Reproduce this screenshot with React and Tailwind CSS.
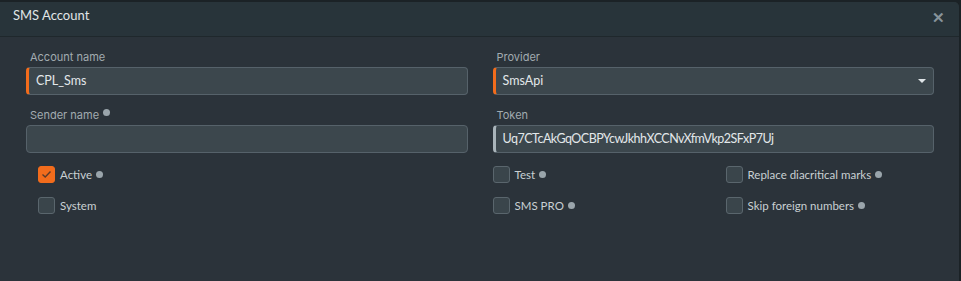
function InfoDot() {
    return <span className="inline-block w-[7px] h-[7px] rounded-full bg-[#9aa5ab] ml-[4px] align-middle" />;
}

function Field({ label, value, accent, info, select, tight }) {
    return (
        <div>
            <div className="h-[14px] mb-[3px] pl-[4px] text-[11px] leading-[14px] text-[#a2abb0] flex items-center">
                {label}
                {info && <span className="w-[7px] h-[7px] rounded-full bg-[#9aa5ab] ml-[4px] -mt-[5px]" />}
            </div>
            <div
                className={`relative h-[28px] rounded-[4px] border border-[#56626a] bg-[#3c474d] flex items-center pl-[7px] font-['Lato',sans-serif] text-[12.5px] text-[#e3e8ea] ${tight ? 'tracking-[-0.04em]' : ''} ${accent}`}
            >
                {value}
                {select && (
                    <span className="absolute right-[7px] top-[11px] w-0 h-0 border-l-[4px] border-r-[4px] border-t-[4px] border-l-transparent border-r-transparent border-t-[#dfe5e8]" />
                )}
            </div>
        </div>
    );
}

function Check({ label, checked, info }) {
    return (
        <div className="flex items-center h-[17px]">
            <span
                className={`w-[17px] h-[17px] rounded-[3px] border flex items-center justify-center ${checked ? 'bg-[#f26c1c] border-[#f26c1c]' : 'bg-[#3a454b] border-[#5a666d]'}`}
            >
                {checked && (
                    <svg width="11" height="9" viewBox="0 0 11 9" fill="none">
                        <path d="M1.5 4.5 L4.2 7 L9.5 1.5" stroke="#5a3a2a" strokeWidth="1.4" />
                    </svg>
                )}
            </span>
            <span className="ml-[5px] font-['Lato',sans-serif] text-[11.5px] text-[#c9d0d3]">{label}</span>
            {info && <InfoDot />}
        </div>
    );
}

export default function App() {
    return (
        <div className="w-[961px] h-[281px] bg-[#1b2226] pt-[2px] pr-[2px] font-['Inter',sans-serif]">
            <div className="h-full rounded-tr-[5px] overflow-hidden bg-[#2b333a] flex flex-col">
                {/* Header */}
                <div className="h-[35px] shrink-0 bg-[#28343a] border-b border-[#1f282c] flex items-center justify-between pl-[13px] pr-[14px] pb-[6px]">
                    <span className="font-['Lato',sans-serif] text-[13px] text-[#e0e6e8]">SMS Account</span>
                    <span className="text-[15px] font-bold text-[#87939a] leading-none mt-[3px]">✕</span>
                </div>

                {/* Body */}
                <div className="pl-[26px] pr-[25px] pt-[13px]">
                    <div className="grid grid-cols-2 gap-x-[25px] gap-y-[13px]">
                        <Field label="Account name" value="CPL_Sms" accent="border-l-[3px] border-l-[#f26c1c]" />
                        <Field label="Provider" value="SmsApi" accent="border-l-[3px] border-l-[#f26c1c]" select />
                        <Field label="Sender name" value="" info />
                        <Field
                            label="Token"
                            value="Uq7CTcAkGqOCBPYcwJkhhXCCNvXfmVkp2SFxP7Uj"
                            accent="border-l-[3px] border-l-[#a9b4ba]"
                            tight
                        />
                    </div>

                    <div className="grid grid-cols-2 gap-x-[25px] mt-[13px]">
                        <div className="pl-[12px] flex flex-col gap-[14px]">
                            <Check label="Active" checked info />
                            <Check label="System" />
                        </div>
                        <div className="grid grid-cols-[233px_1fr] gap-y-[14px]">
                            <Check label="Test" info />
                            <Check label="Replace diacritical marks" info />
                            <Check label="SMS PRO" info />
                            <Check label="Skip foreign numbers" info />
                        </div>
                    </div>
                </div>
            </div>
        </div>
    );
}
